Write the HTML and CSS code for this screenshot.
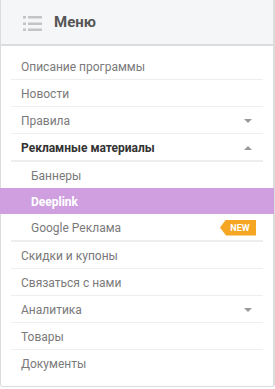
FILE: index.html
```html
<!DOCTYPE html>
<html lang="ru">
<head>
    <meta charset="UTF-8">
    <meta name="viewport" content="width=device-width, initial-scale=1.0">
    <title>Меню</title>
    <link rel="stylesheet" href="styles.css">
</head>
<body>
<div class="menu">
    <div class="menu-head">
        <svg class="menu-icon" width="19" height="16" viewBox="0 0 19 16">
            <rect x="0" y="1" width="3" height="2.5" fill="#c4c4c4"/>
            <rect x="5" y="1" width="14" height="2.5" fill="#c4c4c4"/>
            <rect x="0" y="7.5" width="3" height="2.5" fill="#c4c4c4"/>
            <rect x="5" y="7.5" width="14" height="2.5" fill="#c4c4c4"/>
            <rect x="0" y="13.5" width="3" height="2.5" fill="#c4c4c4"/>
            <rect x="5" y="13.5" width="14" height="2.5" fill="#c4c4c4"/>
        </svg>
        <span class="menu-title">Меню</span>
    </div>
    <ul class="nav">
        <li class="item">Описание программы</li>
        <li class="item">Новости</li>
        <li class="item">Правила <span class="caret down"></span></li>
        <li class="item open">Рекламные материалы <span class="caret up"></span></li>
        <li class="sub">
            <div class="sub-item">Баннеры</div>
            <div class="sub-item active">Deeplink</div>
            <div class="sub-item">Google Реклама <span class="badge">NEW</span></div>
        </li>
        <li class="item">Скидки и купоны</li>
        <li class="item">Связаться с нами</li>
        <li class="item">Аналитика <span class="caret down"></span></li>
        <li class="item">Товары</li>
        <li class="item last">Документы</li>
    </ul>
</div>
</body>
</html>
```
FILE: styles.css
```css
body {
    margin: 0;
    font-family: Roboto, 'Liberation Sans', sans-serif;
    background: #fff;
}

.menu {
    width: 272px;
    border: 1px solid #dcdcdc;
    border-top: none;
    border-right-width: 2px;
    border-radius: 0 0 3px 3px;
    background: #fff;
}

/* header */
.menu-head {
    height: 44px;
    display: flex;
    align-items: center;
    background: #f5f6f8;
    border-bottom: 2px solid #dcdcdc;
}
.menu-icon {
    margin-left: 22px;
    margin-top: 1px;
}
.menu-title {
    margin-left: 12px;
    font-size: 15px;
    font-weight: 700;
    color: #555;
}

/* list */
.nav {
    list-style: none;
    margin: 0;
    padding: 7px 0 10px;
}
.item {
    margin: 0 10px 0 10px;
    height: 25px;
    padding: 1px 11px 0 10px;
    display: flex;
    align-items: center;
    justify-content: space-between;
    font-size: 12px;
    color: #7a7a7a;
    border-bottom: 1px solid #eee;
}
.item.open {
    font-weight: 700;
    color: #333;
    border-bottom: 2px solid #eee;
}
.item.last {
    border-bottom: none;
}

.caret {
    width: 0;
    height: 0;
    border-left: 4px solid transparent;
    border-right: 4px solid transparent;
}
.caret.down {
    border-top: 4px solid #999;
}
.caret.up {
    border-bottom: 4px solid #999;
}

/* submenu */
.sub {
    margin: 0 10px;
    border-bottom: 2px solid #eee;
}
.sub-item {
    margin: 0 -11px 0 -11px;
    height: 25px;
    padding: 1px 18px 0 31px;
    display: flex;
    align-items: center;
    justify-content: space-between;
    font-size: 12px;
    color: #7a7a7a;
}
.sub-item.active {
    background: #cf9fe0;
    color: #fff;
    font-weight: 700;
}

.badge {
    width: 36px;
    height: 16px;
    display: flex;
    align-items: center;
    justify-content: center;
    padding-left: 4px;
    box-sizing: border-box;
    background: #f5a623;
    color: #fff;
    font-size: 9px;
    font-weight: 700;
    clip-path: polygon(6px 0, 100% 0, 100% 100%, 6px 100%, 0 50%);
}
```
